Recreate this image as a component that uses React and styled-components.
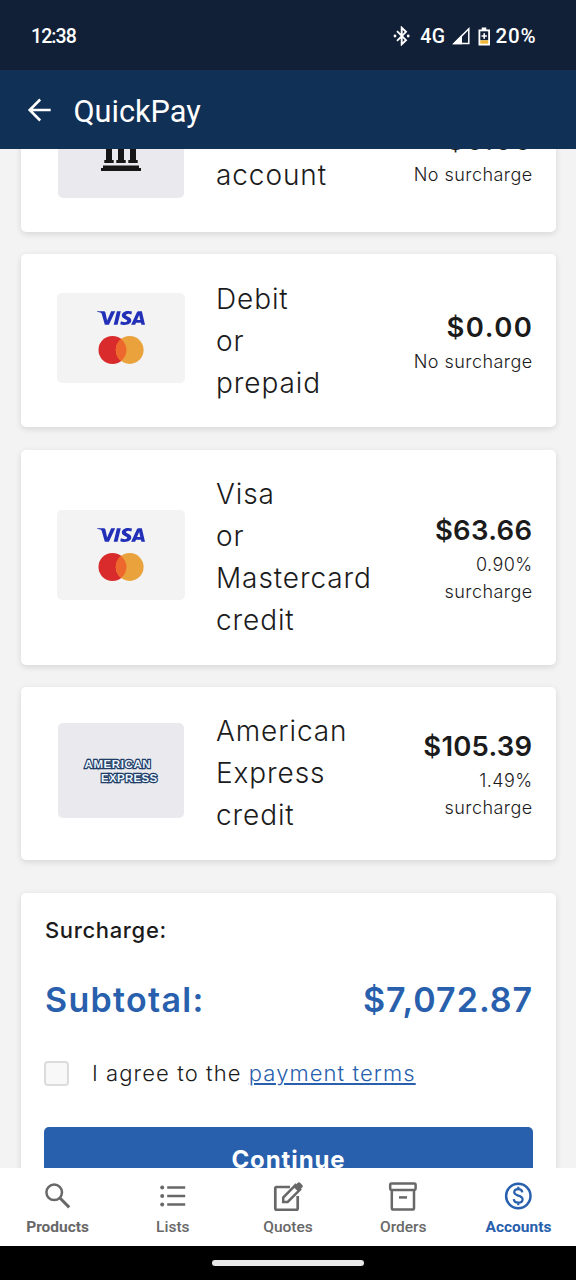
import React from "react";
import styled, { createGlobalStyle } from "styled-components";
import { SiVisa } from "react-icons/si";

const GlobalStyle = createGlobalStyle`
  * {
    box-sizing: border-box;
  }

  body {
    margin: 0;
    background-color: #f3f3f3;
    font-family: Inter, "Open Sans", sans-serif;
    color: #1b1b1c;
  }
`;

const Screen = styled.div`
  width: 576px;
  height: 1280px;
  display: flex;
  flex-direction: column;
  overflow: hidden;
`;

const StatusBar = styled.div`
  flex: none;
  height: 70px;
  padding: 2px 40px 0 31px;
  display: flex;
  align-items: center;
  justify-content: space-between;
  background-color: #112037;
  color: white;
  font-family: Roboto, sans-serif;
  font-size: 19.5px;
  font-weight: 500;
`;

const Clock = styled.span`
  letter-spacing: -0.9px;
`;

const StatusIcons = styled.div`
  display: flex;
  align-items: center;

  svg {
    display: block;
  }
`;

const Network = styled.span`
  margin: 0 6px 0 9px;
  letter-spacing: 0.5px;
`;

const Battery = styled.span`
  margin: 0 6px 0 8px;
`;

const Percent = styled.span`
  margin-right: -0.4px;
  font-size: 20.5px;
  letter-spacing: 0.8px;
`;

const AppBar = styled.header`
  flex: none;
  height: 79px;
  padding: 1px 25px 0;
  display: flex;
  align-items: center;
  gap: 17.5px;
  background-color: #113055;
  color: white;

  svg {
    display: block;
  }
`;

const Title = styled.h1`
  margin: 2px 0 0;
  font-family: Roboto, sans-serif;
  font-size: 30.7px;
  font-weight: 400;
`;

const Content = styled.main`
  flex: 1;
  min-height: 0;
  padding: 0 20px 0 21px;
  overflow: hidden;
`;

/* The list is scrolled, so its first card starts above the visible area. */
const Methods = styled.div`
  margin-top: -73.2px;
  display: flex;
  flex-direction: column;
  gap: 22.4px;
`;

const Card = styled.section`
  background-color: white;
  border-radius: 5px;
  box-shadow: 0 2px 6px rgba(0, 0, 0, 0.12);
`;

const MethodCard = styled(Card)`
  height: ${(props) => props.$height}px;
  padding: 0 24px 0 36px;
  display: grid;
  grid-template-columns: 128px 1fr auto;
  align-items: center;
  column-gap: 31px;
`;

const Tile = styled.div`
  width: ${(props) => (props.$brands ? 128 : 126)}px;
  height: ${(props) => (props.$brands ? 90 : 95)}px;
  margin-bottom: ${(props) => (props.$brands ? 5 : 6)}px;
  justify-self: center;
  display: flex;
  flex-direction: column;
  align-items: center;
  justify-content: center;
  border-radius: 5px;
  background-color: ${(props) => (props.$brands ? "#f3f3f3" : "#eaeaee")};

  svg {
    display: block;
  }
`;

const VisaMark = styled(SiVisa)`
  width: 48px;
  height: 48px;
  margin: -18px 0 -6px;
  transform: scaleY(0.9);
  color: #2230b8;
`;

const Amex = styled.div`
  width: 73px;
  margin-top: 1px;
  display: flex;
  flex-direction: column;
  font-family: "Liberation Sans", sans-serif;
  font-size: 11.5px;
  font-weight: 700;
  line-height: 14px;
  color: #eaf4ff;
  -webkit-text-stroke: 2.4px #1f3c66;
  paint-order: stroke fill;
`;

const AmexWord = styled.span`
  align-self: ${(props) => (props.$end ? "flex-end" : "flex-start")};
  letter-spacing: ${(props) => props.$spacing}px;
`;

const Label = styled.div`
  font-size: 28px;
  font-weight: 300;
  line-height: 42px;
  letter-spacing: 0.9px;
  white-space: pre-line;
`;

const Cost = styled.div`
  max-width: 124px;
  margin-right: -0.6px;
  text-align: right;
`;

const Amount = styled.div`
  margin-right: ${(props) => 0.6 - props.$spacing}px;
  font-size: 27.5px;
  font-weight: 600;
  line-height: 41px;
  letter-spacing: ${(props) => props.$spacing}px;
`;

const Note = styled.div`
  font-size: 18px;
  font-weight: 300;
  line-height: 27px;
  letter-spacing: 0.45px;
`;

const Summary = styled(Card)`
  height: 340px;
  margin-top: 33.4px;
  padding: 22.6px 23px 0;
`;

const SurchargeTitle = styled.div`
  margin-left: 1px;
  font-size: 22px;
  font-weight: 500;
  line-height: 28px;
  letter-spacing: 0.65px;
`;

const Subtotal = styled.div`
  margin: 32px 0 0 1px;
  display: flex;
  justify-content: space-between;
  font-size: 34px;
  font-weight: 600;
  line-height: 48px;
  color: #2860ad;
`;

const SubtotalLabel = styled.span`
  letter-spacing: 1.3px;
`;

const SubtotalValue = styled.span`
  margin-right: -0.2px;
  letter-spacing: 1px;
`;

const Terms = styled.label`
  margin-top: 35.4px;
  display: flex;
  align-items: center;
  font-size: 22px;
  font-weight: 300;
  line-height: 28px;
  letter-spacing: 1.08px;
  white-space: pre;
`;

const Checkbox = styled.input`
  appearance: none;
  width: 25px;
  height: 25px;
  margin: 0 23px 0 0;
  border: 2px solid #dcdcdc;
  border-radius: 4px;
  background-color: #f8f8f8;
`;

const TermsLink = styled.a`
  color: #2860ad;
  text-decoration: underline;
  text-decoration-thickness: 2px;
  text-underline-offset: 2px;
`;

const ContinueButton = styled.button`
  width: 100%;
  height: 66px;
  margin-top: 39.6px;
  padding: 0;
  border: none;
  border-radius: 5px;
  background-color: #2860ad;
  color: white;
  font-family: inherit;
  font-size: 24px;
  font-weight: 700;
  letter-spacing: 0.9px;
`;

const TabBar = styled.nav`
  flex: none;
  height: 78px;
  display: flex;
  background-color: white;
`;

const Tab = styled.a`
  flex: 1;
  padding-top: 13px;
  display: flex;
  flex-direction: column;
  align-items: center;
  gap: 7px;
  color: ${(props) => (props.$active ? "#2860ad" : "#686868")};
  font-family: Roboto, sans-serif;
  font-size: 15.5px;
  font-weight: ${(props) => (props.$strong ? 700 : 500)};
  line-height: 18px;

  svg {
    display: block;
  }
`;

const SystemBar = styled.div`
  flex: none;
  height: 34px;
  display: flex;
  align-items: center;
  justify-content: center;
  background-color: black;
`;

const Handle = styled.div`
  width: 152px;
  height: 6px;
  border-radius: 3px;
  background-color: #e8e8e8;
`;

const BluetoothIcon = () => (
  <svg width="18" height="20" viewBox="0 0 18 20" fill="none" stroke="white">
    <path d="M4 5.2l9 9-4.3 4.1V1.7L13 5.8l-9 9" strokeWidth="1.9" />
    <circle cx="2" cy="10" r="1.4" fill="white" stroke="none" />
    <circle cx="15.2" cy="10" r="1.4" fill="white" stroke="none" />
  </svg>
);

const SignalIcon = () => (
  <svg width="18" height="18" viewBox="0 0 18 18">
    <path d="M16.8 1.8V16.6H2z" fill="none" stroke="white" strokeWidth="1.5" />
    <path d="M0.5 17.3L10 7.8v9.5z" fill="white" />
  </svg>
);

const BatteryIcon = () => (
  <svg width="12" height="19" viewBox="0 0 12 19">
    <path d="M3.7 0.5h4.6v2H12V18.5H0.5V2.5h3.2z" fill="white" />
    <path d="M2.3 4.3h7.9v9H2.3z" fill="#112037" />
    <path d="M2.3 13.3h7.9v3.4H2.3z" fill="#f0b93a" />
    <path d="M6.2 6.3v5.4M3.5 9h5.4" stroke="white" strokeWidth="1.7" />
  </svg>
);

const BackIcon = () => (
  <svg width="31" height="30" viewBox="0 0 31 30" fill="none">
    <path
      d="M15.2 4.5L4.7 15l10.5 10.5M4.700 15h21"
      stroke="white"
      strokeWidth="2.6"
    />
  </svg>
);

const BankIcon = () => (
  <svg width="40" height="40" viewBox="0 0 40 40" fill="#161616">
    <path d="M20 0l19 9v4H1V9z" />
    <path d="M5 15h6v14h1.7v3H3.3v-3H5zM17 15h6v14h1.7v3h-9.4v-3H17zM29 15h6v14h1.7v3h-9.4v-3H29z" />
    <path d="M2 34.5h36v2.5h2v3H0v-3h2z" />
  </svg>
);

const MastercardIcon = () => (
  <svg width="46" height="28" viewBox="0 0 46 28">
    <circle cx="14.5" cy="14" r="14" fill="#d92b2b" />
    <circle cx="31.7" cy="14" r="13.9" fill="#e9a23c" />
    <path d="M23.1 3a13.95 13.95 0 0 1 0 22a13.95 13.95 0 0 1 0-22z" fill="#ee672c" />
  </svg>
);

const TabIcon = ({ children }) => (
  <svg
    width="30"
    height="30"
    viewBox="0 0 30 30"
    fill="none"
    stroke="currentColor"
    strokeWidth="2.5"
  >
    {children}
  </svg>
);

const SearchIcon = () => (
  <TabIcon>
    <circle cx="11.2" cy="11.3" r="7.8" />
    <path d="M16.7 16.8l9.5 9.6" strokeWidth="3" />
  </TabIcon>
);

const ListIcon = () => (
  <TabIcon>
    <path d="M9.2 6.5h18M9.2 15h18M9.2 23.4h18" />
    <g fill="currentColor" stroke="none">
      <circle cx="4.2" cy="6.5" r="2" />
      <circle cx="4.2" cy="15" r="2" />
      <circle cx="4.2" cy="23.4" r="2" />
    </g>
  </TabIcon>
);

const QuoteIcon = () => (
  <TabIcon>
    <path
      d="M17 6H3.5a1.2 1.2 0 0 0-1.2 1.2v20.4A1.2 1.2 0 0 0 3.5 28.8h20a1.2 1.2 0 0 0 1.2-1.2V15"
      strokeWidth="2.7"
    />
    <path d="M10.2 21v-4.5L22.5 4l4.6 4.6L14.7 21z" strokeWidth="2.5" />
    <path
      d="M20.5 6l4-4a2 2 0 0 1 2.8 0l1.8 1.8a2 2 0 0 1 0 2.8l-4 4z"
      fill="currentColor"
      stroke="none"
    />
  </TabIcon>
);

const OrderIcon = () => (
  <TabIcon>
    <rect x="2.2" y="2.4" width="25.4" height="6.6" rx="1.2" />
    <path d="M3.8 9v18a1.6 1.6 0 0 0 1.6 1.6h19a1.6 1.6 0 0 0 1.6-1.6V9" />
    <path d="M11 16.4h8" />
  </TabIcon>
);

const AccountIcon = () => (
  <TabIcon>
    <circle cx="15.3" cy="15" r="12.2" />
    <path
      d="M19.3 11.3c-.3-2-1.8-3.2-4-3.2s-4.1 1.2-4.1 3.2c0 4.3 8.4 2.4 8.4 7 0 2.2-1.8 3.4-4.3 3.4s-4.3-1.3-4.5-3.5M15.3 5.8v2.5M15.3 21.7v2.5"
      strokeWidth="2.2"
    />
  </TabIcon>
);

const CardBrands = () => (
  <Tile $brands>
    <VisaMark />
    <MastercardIcon />
  </Tile>
);

const methods = [
  {
    label: "Bank\naccount",
    amount: "$0.00",
    spacing: 1.5,
    note: "No surcharge",
    height: 156,
    logo: (
      <Tile>
        <BankIcon />
      </Tile>
    ),
  },
  {
    label: "Debit\nor\nprepaid",
    amount: "$0.00",
    spacing: 1.5,
    note: "No surcharge",
    height: 173,
    logo: <CardBrands />,
  },
  {
    label: "Visa\nor\nMastercard\ncredit",
    amount: "$63.66",
    spacing: 0.3,
    note: "0.90% surcharge",
    height: 215,
    logo: <CardBrands />,
  },
  {
    label: "American\nExpress\ncredit",
    amount: "$105.39",
    spacing: 0.2,
    note: "1.49% surcharge",
    height: 173,
    logo: (
      <Tile>
        <Amex>
          <AmexWord $spacing={0.6}>AMERICAN</AmexWord>
          <AmexWord $spacing={0.3} $end>
            EXPRESS
          </AmexWord>
        </Amex>
      </Tile>
    ),
  },
];

const tabs = [
  { name: "Products", icon: <SearchIcon />, strong: true },
  { name: "Lists", icon: <ListIcon /> },
  { name: "Quotes", icon: <QuoteIcon /> },
  { name: "Orders", icon: <OrderIcon /> },
  { name: "Accounts", icon: <AccountIcon />, strong: true, active: true },
];

const App = () => (
  <>
    <GlobalStyle />
    <Screen>
      <StatusBar>
        <Clock>12:38</Clock>
        <StatusIcons>
          <BluetoothIcon />
          <Network>4G</Network>
          <SignalIcon />
          <Battery>
            <BatteryIcon />
          </Battery>
          <Percent>20%</Percent>
        </StatusIcons>
      </StatusBar>
      <AppBar>
        <BackIcon />
        <Title>QuickPay</Title>
      </AppBar>
      <Content>
        <Methods>
          {methods.map((item) => (
            <MethodCard key={item.label} $height={item.height}>
              {item.logo}
              <Label>{item.label}</Label>
              <Cost>
                <Amount $spacing={item.spacing}>{item.amount}</Amount>
                <Note>{item.note}</Note>
              </Cost>
            </MethodCard>
          ))}
        </Methods>
        <Summary>
          <SurchargeTitle>Surcharge:</SurchargeTitle>
          <Subtotal>
            <SubtotalLabel>Subtotal:</SubtotalLabel>
            <SubtotalValue>$7,072.87</SubtotalValue>
          </Subtotal>
          <Terms>
            <Checkbox type="checkbox" />
            I agree to the <TermsLink>payment terms</TermsLink>
          </Terms>
          <ContinueButton>Continue</ContinueButton>
        </Summary>
      </Content>
      <TabBar>
        {tabs.map((tab) => (
          <Tab key={tab.name} $strong={tab.strong} $active={tab.active}>
            {tab.icon}
            {tab.name}
          </Tab>
        ))}
      </TabBar>
      <SystemBar>
        <Handle />
      </SystemBar>
    </Screen>
  </>
);

export default App;
